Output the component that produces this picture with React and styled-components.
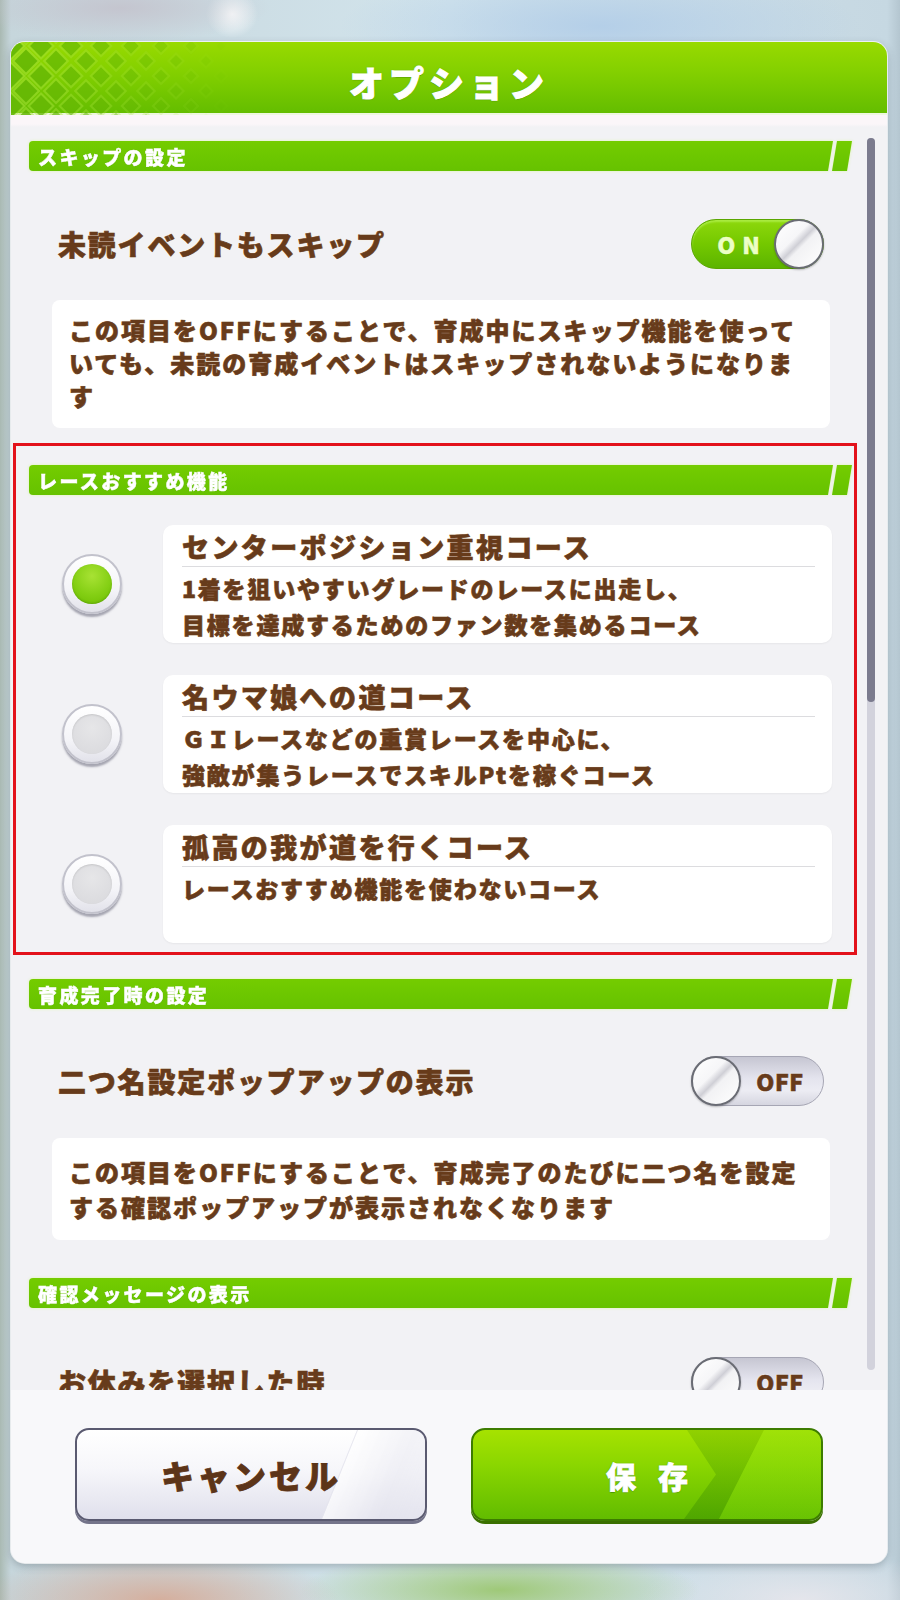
import React from 'react';
import styled, { createGlobalStyle, css } from 'styled-components';

const Global = createGlobalStyle`
  html, body { margin: 0; padding: 0; }
  body {
    width: 900px;
    height: 1600px;
    overflow: hidden;
    font-family: "Noto Sans CJK JP", "Noto Sans", sans-serif;
  }
  * { box-sizing: border-box; }
`;

const Page = styled.div`
  width: 900px;
  height: 1600px;
  padding: 42px 13px 0 11px;
  background:
    radial-gradient(ellipse 150px 34px at 120px 8px, rgba(196, 196, 206, 0.95), rgba(196, 196, 206, 0)),
    radial-gradient(ellipse 26px 24px at 232px 14px, rgba(255, 255, 255, 0.95), rgba(255, 255, 255, 0)),
    radial-gradient(ellipse 260px 60px at 600px 26px, rgba(176, 204, 232, 0.85), rgba(176, 204, 232, 0)),
    radial-gradient(ellipse 180px 50px at 160px 1600px, rgba(214, 170, 150, 0.9), rgba(214, 170, 150, 0)),
    radial-gradient(ellipse 200px 40px at 500px 1590px, rgba(150, 196, 100, 0.85), rgba(150, 196, 100, 0)),
    radial-gradient(ellipse 160px 50px at 800px 1600px, rgba(230, 230, 236, 0.95), rgba(230, 230, 236, 0)),
    linear-gradient(90deg, #a9b9b2 0px, #c6d6dc 11px, #d2e4ec 50%, #c6d8e2 887px, #b4c6d0 900px);
`;

const Modal = styled.div`
  width: 876px;
  height: 1521px;
  border-radius: 14px;
  overflow: hidden;
  display: flex;
  flex-direction: column;
  background: #f2f2f5;
  box-shadow: 0 0 0 1px rgba(255, 255, 255, 0.7), 0 3px 8px rgba(40, 50, 60, 0.3);
`;

const Header = styled.div`
  position: relative;
  height: 73px;
  flex-shrink: 0;
  display: flex;
  align-items: center;
  justify-content: center;
  padding-top: 8px;
  background: linear-gradient(180deg, #98da00 0%, #82cf00 45%, #64bd00 100%);
  border-bottom: 2px solid #eef7e0;
`;

const HeaderPattern = styled.svg`
  position: absolute;
  left: 0;
  top: 0;
`;

const Title = styled.h1`
  position: relative;
  margin: 0;
  font-size: 35px;
  font-weight: 900;
  letter-spacing: 5px;
  color: #ffffff;
  -webkit-text-stroke: 1px #ffffff;
  text-shadow: 0 1px 0 rgba(60, 120, 0, 0.55), 0 0 2px rgba(70, 130, 0, 0.5);
`;

const ScrollArea = styled.div`
  height: 1275px;
  flex-shrink: 0;
  display: flex;
  align-items: flex-start;
  overflow: hidden;
  padding: 26px 12px 0 18px;
  background: linear-gradient(180deg, #fbf6f9 0px, #fbf6f9 9px, #f2f2f5 12px);
`;

const Content = styled.div`
  flex: 1;
  display: flex;
  flex-direction: column;
`;

const ScrollTrack = styled.div`
  width: 8px;
  height: 1232px;
  margin: -3px 0 0 15px;
  border-radius: 4px;
  background: #d2d2dc;
  flex-shrink: 0;
`;

const ScrollThumb = styled.div`
  height: 564px;
  border-radius: 4px;
  background: #7b7b8e;
`;

const BarWrap = styled.div`
  display: flex;
  height: 30px;
  flex-shrink: 0;
  margin-top: ${(p) => p.$mt || 0}px;
  filter: drop-shadow(0 0 1.5px #dff5b0);
`;

const BarBody = styled.div`
  width: 804px;
  display: flex;
  align-items: center;
  padding-left: 9px;
  border-radius: 4px 0 0 4px;
  background: linear-gradient(180deg, #74cc00, #66c200);
  clip-path: polygon(0 0, 100% 0, calc(100% - 5px) 100%, 0 100%);
  color: #ffffff;
  font-size: 19px;
  font-weight: 900;
  letter-spacing: 2.4px;
  -webkit-text-stroke: 0.5px #ffffff;
  text-shadow: 0 0 1px #4c9c00;
  white-space: nowrap;
`;

const BarStripe = styled.div`
  width: 20px;
  margin-left: -1px;
  background: linear-gradient(180deg, #74cc00, #66c200);
  clip-path: polygon(5px 0, 100% 0, 15px 100%, 0 100%);
`;

const brownText = css`
  color: #673b1b;
  font-weight: 900;
  -webkit-text-stroke: 0.6px #673b1b;
  text-shadow: 0 0 1px #fde3c0, 0 0 2px #fff0da;
`;

const SettingRow = styled.div`
  display: flex;
  align-items: center;
  justify-content: space-between;
  height: 50px;
  flex-shrink: 0;
  margin-top: ${(p) => p.$mt}px;
  padding: 0 28px 0 29px;
`;

const Label = styled.div`
  ${brownText};
  font-size: 28px;
  letter-spacing: 1.8px;
  white-space: nowrap;
`;

const Toggle = styled.div`
  position: relative;
  width: 133px;
  height: 50px;
  border-radius: 25px;
  display: flex;
  align-items: center;
  flex-direction: ${(p) => (p.$on ? 'row' : 'row-reverse')};
  ${(p) =>
    p.$on
      ? css`
          background: linear-gradient(180deg, #8ed80c 0%, #74c800 50%, #5cb400 100%);
          border: 1px solid #5aa600;
          box-shadow: inset 0 2px 2px rgba(200, 255, 120, 0.5);
        `
      : css`
          background: linear-gradient(180deg, #c6c6d2 0%, #e4e4ee 45%, #ececf3 70%, #d6d6e0 100%);
          border: 1px solid #a6a6b4;
        `}
`;

const ToggleText = styled.span`
  flex: 1;
  text-align: center;
  white-space: nowrap;
  font-weight: 900;
  ${(p) =>
    p.$on
      ? css`
          padding-left: 18px;
          font-size: 23px;
          letter-spacing: 7px;
          color: #ecffc4;
          -webkit-text-stroke: 0.5px #ecffc4;
          text-shadow: 0 0 1px #4e9a00;
        `
      : css`
          padding-right: 4px;
          font-size: 23px;
          letter-spacing: 0.5px;
          color: #673b1b;
          -webkit-text-stroke: 0.6px #673b1b;
          text-shadow: 0 0 1px #fff, 0 0 2px #fff3e6;
        `}
`;

const Knob = styled.div`
  width: 50px;
  height: 50px;
  flex-shrink: 0;
  margin: ${(p) => (p.$on ? '0 -1px 0 0' : '0 0 0 -1px')};
  border-radius: 50%;
  border: 2px solid #6a6c74;
  background: linear-gradient(135deg, #ffffff 0%, #f6f6f8 38%, #cfcfd6 49%, #f2f2f4 56%, #ffffff 100%);
  box-shadow: 0 1px 2px rgba(0, 0, 0, 0.25);
`;

const DescBox = styled.div`
  ${brownText};
  margin: ${(p) => p.$mt}px 22px 0 23px;
  padding: ${(p) => p.$pad};
  background: #ffffff;
  border-radius: 8px;
  font-size: 24px;
  line-height: ${(p) => p.$lh}px;
  letter-spacing: 2px;
  white-space: nowrap;
`;

const Highlight = styled.section`
  margin: 15px -5px 0 -16px;
  padding: 19px 2px 9px 13px;
  border: 3px solid #e3121b;
  display: flex;
  flex-direction: column;
`;

const Section = styled.section`
  display: flex;
  flex-direction: column;
  margin-top: ${(p) => p.$mt || 0}px;
`;

const CourseRow = styled.div`
  display: flex;
  align-items: center;
  margin: ${(p) => p.$mt}px 20px 0 0;
  padding-left: 33px;
`;

const Radio = styled.div`
  width: 60px;
  height: 60px;
  flex-shrink: 0;
  border-radius: 50%;
  display: flex;
  align-items: center;
  justify-content: center;
  border: 2px solid #c2c2cc;
  background: linear-gradient(180deg, #ffffff 0%, #f4f4f8 60%, #e2e2ea 100%);
  box-shadow: 0 3px 2px rgba(90, 90, 110, 0.5);
`;

const RadioDot = styled.div`
  width: 40px;
  height: 40px;
  border-radius: 50%;
  ${(p) =>
    p.$on
      ? css`
          background: radial-gradient(circle at 50% 30%, #a8e234 0%, #84cf14 55%, #6cbc00 100%);
          box-shadow: inset 0 -1px 2px rgba(40, 100, 0, 0.3);
        `
      : css`
          background: radial-gradient(circle at 50% 35%, #e6e6e8 0%, #d8d8dc 100%);
          box-shadow: inset 0 1px 2px rgba(0, 0, 0, 0.12);
        `}
`;

const Card = styled.div`
  flex: 1;
  min-height: 118px;
  margin-left: 41px;
  padding: 6px 17px 1px 19px;
  border-radius: 10px;
  background: #ffffff;
  box-shadow: 0 1px 2px rgba(0, 0, 0, 0.05);
`;

const CardTitle = styled.div`
  ${brownText};
  font-size: 27px;
  line-height: 32px;
  letter-spacing: 2.4px;
  white-space: nowrap;
`;

const Divider = styled.div`
  height: 1px;
  margin: 3px 0;
  background: #dcdcdf;
`;

const CardDesc = styled.div`
  ${brownText};
  font-size: 23px;
  line-height: 36px;
  letter-spacing: 1.8px;
  white-space: nowrap;
`;

const Footer = styled.div`
  flex: 1;
  display: flex;
  justify-content: center;
  gap: 44px;
  padding-top: 38px;
  background: #f8f8fa;
`;

const Button = styled.button`
  position: relative;
  overflow: hidden;
  width: 352px;
  height: 93px;
  padding: 0;
  border-radius: 14px;
  font-family: inherit;
  font-weight: 900;
  cursor: pointer;
  ${(p) =>
    p.$primary
      ? css`
          border: 2px solid #3d7c00;
          background: linear-gradient(180deg, #a6e200 0%, #8ad600 40%, #62bc00 100%);
          box-shadow: 0 3px 0 #3a7000;
          color: #ffffff;
          font-size: 30px;
          letter-spacing: 22px;
          text-indent: 22px;
          -webkit-text-stroke: 0.8px #ffffff;
          text-shadow: 0 0 2px #3c8a00, 0 1px 0 #4a9a00;
          &::before {
            content: '';
            position: absolute;
            inset: 0;
            background: linear-gradient(180deg, rgba(50, 130, 0, 0.18), rgba(30, 110, 0, 0.28));
            clip-path: polygon(214px 0, 291px 0, 246px 100%, 211px 100%, 243px 50%);
          }
          &::after {
            content: '';
            position: absolute;
            inset: 0;
            background: linear-gradient(180deg, rgba(150, 225, 20, 0.4), rgba(120, 210, 10, 0.3));
            clip-path: polygon(291px 0, 100% 0, 100% 100%, 246px 100%);
          }
        `
      : css`
          border: 2px solid #5a5a70;
          background: linear-gradient(180deg, #ffffff 0%, #f6f6fa 45%, #e0e0ec 100%);
          box-shadow: 0 3px 0 #74748a;
          color: #5c3418;
          font-size: 33px;
          letter-spacing: 3px;
          -webkit-text-stroke: 0.8px #5c3418;
          text-shadow: 0 0 1px #fde3c0;
          &::after {
            content: '';
            position: absolute;
            top: 0;
            bottom: 0;
            left: 262px;
            width: 140px;
            background: linear-gradient(90deg, rgba(255, 255, 255, 0.7), rgba(232, 232, 240, 0.5) 40%, rgba(240, 240, 246, 0.3));
            border-left: 1px solid rgba(226, 226, 236, 0.8);
            transform: skewX(-22deg);
          }
        `}
`;

const ButtonLabel = styled.span`
  position: relative;
  z-index: 1;
`;

function Pattern() {
  const shapes = [];
  for (let r = -1; r < 7; r++) {
    for (let c = 0; c < 9; c++) {
      const cx = c * 30 + (r % 2 !== 0 ? 15 : 0);
      const cy = r * 15 + 4;
      const t = cx / 230;
      if (t > 1) continue;
      const op = Math.max(0, 1 - t * 1.05);
      const s = 15 * (1 - t * 0.55);
      const inner = Math.max(2, s - 3);
      shapes.push(
        <g key={`${r}-${c}`} opacity={op}>
          <polygon
            points={`${cx},${cy - s} ${cx + s},${cy} ${cx},${cy + s} ${cx - s},${cy}`}
            fill="#a8e23c"
            opacity="0.55"
          />
          <polygon
            points={`${cx},${cy - inner} ${cx + inner},${cy} ${cx},${cy + inner} ${cx - inner},${cy}`}
            fill="#5fb400"
            opacity="0.85"
          />
        </g>
      );
    }
  }
  return (
    <HeaderPattern width="240" height="73" viewBox="0 0 240 73">
      {shapes}
    </HeaderPattern>
  );
}

function SectionBar({ children, mt }) {
  return (
    <BarWrap $mt={mt}>
      <BarBody>{children}</BarBody>
      <BarStripe />
    </BarWrap>
  );
}

function Switch({ on }) {
  return (
    <Toggle $on={on}>
      <ToggleText $on={on}>{on ? 'ON' : 'OFF'}</ToggleText>
      <Knob $on={on} />
    </Toggle>
  );
}

const courses = [
  {
    title: 'センターポジション重視コース',
    lines: ['1着を狙いやすいグレードのレースに出走し、', '目標を達成するためのファン数を集めるコース'],
    on: true,
  },
  {
    title: '名ウマ娘への道コース',
    lines: ['ＧＩレースなどの重賞レースを中心に、', '強敵が集うレースでスキルPtを稼ぐコース'],
    on: false,
  },
  {
    title: '孤高の我が道を行くコース',
    lines: ['レースおすすめ機能を使わないコース'],
    on: false,
  },
];

export default function App() {
  return (
    <>
      <Global />
      <Page>
        <Modal>
          <Header>
            <Pattern />
            <Title>オプション</Title>
          </Header>
          <ScrollArea>
            <Content>
              <Section>
                <SectionBar>スキップの設定</SectionBar>
                <SettingRow $mt={48}>
                  <Label>未読イベントもスキップ</Label>
                  <Switch on />
                </SettingRow>
                <DescBox $mt={31} $lh={33} $pad="13px 17px 16px">
                  この項目をOFFにすることで、育成中にスキップ機能を使って
                  <br />
                  いても、未読の育成イベントはスキップされないようになりま
                  <br />す
                </DescBox>
              </Section>

              <Highlight>
                <SectionBar>レースおすすめ機能</SectionBar>
                {courses.map((c, i) => (
                  <CourseRow key={c.title} $mt={i === 0 ? 30 : 32}>
                    <Radio>
                      <RadioDot $on={c.on} />
                    </Radio>
                    <Card>
                      <CardTitle>{c.title}</CardTitle>
                      <Divider />
                      {c.lines.map((l) => (
                        <CardDesc key={l}>{l}</CardDesc>
                      ))}
                    </Card>
                  </CourseRow>
                ))}
              </Highlight>

              <Section $mt={24}>
                <SectionBar>育成完了時の設定</SectionBar>
                <SettingRow $mt={47}>
                  <Label>二つ名設定ポップアップの表示</Label>
                  <Switch on={false} />
                </SettingRow>
                <DescBox $mt={32} $lh={35} $pad="16px 17px 16px">
                  この項目をOFFにすることで、育成完了のたびに二つ名を設定
                  <br />
                  する確認ポップアップが表示されなくなります
                </DescBox>
              </Section>

              <Section $mt={38}>
                <SectionBar>確認メッセージの表示</SectionBar>
                <SettingRow $mt={49}>
                  <Label>お休みを選択した時</Label>
                  <Switch on={false} />
                </SettingRow>
              </Section>
            </Content>
            <ScrollTrack>
              <ScrollThumb />
            </ScrollTrack>
          </ScrollArea>
          <Footer>
            <Button type="button">
              <ButtonLabel>キャンセル</ButtonLabel>
            </Button>
            <Button type="button" $primary>
              <ButtonLabel>保存</ButtonLabel>
            </Button>
          </Footer>
        </Modal>
      </Page>
    </>
  );
}
